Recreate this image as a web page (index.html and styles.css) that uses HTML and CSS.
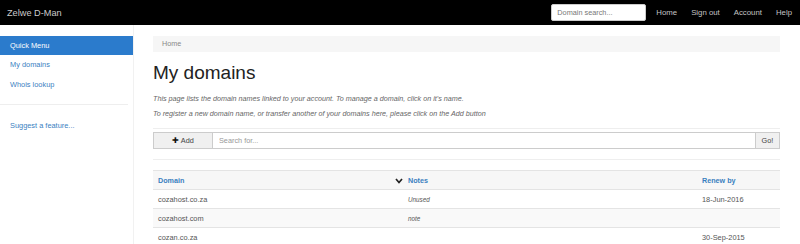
FILE: index.html
```html
<!DOCTYPE html>
<html lang="en">
<head>
    <meta charset="UTF-8">
    <title>Zelwe D-Man</title>
    <link rel="stylesheet" href="styles.css">
</head>
<body>
    <!-- Top bar -->
    <nav class="topbar">
        <a class="brand" href="#">Zelwe D-Man</a>
        <div class="topbar-right">
            <input type="text" class="top-search" placeholder="Domain search...">
            <a href="#">Home</a>
            <a href="#">Sign out</a>
            <a href="#">Account</a>
            <a href="#">Help</a>
        </div>
    </nav>

    <div class="layout">
        <!-- Side menu -->
        <aside class="sidebar">
            <div class="menu-title">Quick Menu</div>
            <a class="menu-item" href="#">My domains</a>
            <a class="menu-item" href="#">Whois lookup</a>
            <hr class="menu-divider">
            <a class="menu-item suggest" href="#">Suggest a feature...</a>
        </aside>

        <main class="content">
            <div class="breadcrumb">Home</div>
            <h1>My domains</h1>
            <p class="intro">This page lists the domain names linked to your account. To manage a domain, click on it's name.</p>
            <p class="intro last">To register a new domain name, or transfer another of your domains here, please click on the Add button</p>
            <hr class="rule">

            <div class="input-group">
                <button class="btn add-btn"><span class="plus">&#10010;</span> Add</button>
                <input type="text" class="search" placeholder="Search for...">
                <button class="btn go-btn">Go!</button>
            </div>
            <hr class="rule">

            <table class="domains">
                <tr>
                    <th class="col-domain">Domain
                        <svg class="chevron" width="8" height="6" viewBox="0 0 8 6"><path d="M1 1 L4 4.5 L7 1" fill="none" stroke="#222" stroke-width="1.7"/></svg>
                    </th>
                    <th class="col-notes">Notes</th>
                    <th class="col-renew">Renew by</th>
                </tr>
                <tr>
                    <td>cozahost.co.za</td>
                    <td class="note">Unused</td>
                    <td>18-Jun-2016</td>
                </tr>
                <tr class="striped">
                    <td>cozahost.com</td>
                    <td class="note">note</td>
                    <td></td>
                </tr>
                <tr>
                    <td>cozan.co.za</td>
                    <td class="note"></td>
                    <td>30-Sep-2015</td>
                </tr>
            </table>
        </main>
    </div>
</body>
</html>
```

FILE: styles.css
```css
body {
    margin: 0;
    font-family: "Liberation Sans", Arial, sans-serif;
    font-size: 7.4px;
    color: #555;
    background: #fff;
}
a {
    color: #3a7fbf;
    text-decoration: none;
}

/* top bar */
.topbar {
    height: 25px;
    background: #000;
    display: flex;
    align-items: center;
    justify-content: space-between;
    padding: 0 8px 0 7px;
}
.brand {
    color: #ccc;
    font-size: 9.2px;
}
.topbar-right {
    display: flex;
    align-items: center;
}
.topbar-right a {
    color: #c4c4c4;
    font-size: 7.8px;
    margin-left: 14px;
}
.top-search {
    width: 95px;
    height: 17px;
    box-sizing: border-box;
    border: 1px solid #ccc;
    border-radius: 2px;
    padding: 0 5px;
    font-family: inherit;
    font-size: 7.3px;
    margin-right: -4px;
}
.top-search::placeholder {
    color: #777;
}

/* layout */
.layout {
    display: flex;
}
.sidebar {
    width: 133px;
    min-height: 219px;
    border-right: 1px solid #f1f1f1;
    padding-top: 11px;
    display: flex;
    flex-direction: column;
    flex-shrink: 0;
}
.menu-title {
    background: #2b7bcc;
    color: #fff;
    height: 19px;
    line-height: 19px;
    padding-left: 10px;
}
.menu-item {
    display: block;
    height: 20px;
    line-height: 20px;
    padding-left: 10px;
}
.menu-divider {
    border: 0;
    border-top: 1px solid #eee;
    margin: 9px 5px 11px 0;
}

.content {
    flex: 1;
    padding: 11px 20px 0 19px;
}
.breadcrumb {
    background: #f6f6f6;
    height: 16px;
    line-height: 16px;
    padding-left: 9px;
    color: #888;
    font-size: 7.2px;
}
h1 {
    font-weight: normal;
    font-size: 19px;
    color: #222;
    margin: 10px 0 10px 0;
}
.intro {
    font-style: italic;
    color: #666;
    font-size: 7.2px;
    margin: 0 0 6px 0;
}
.intro.last {
    margin-bottom: 10px;
}
.rule {
    border: 0;
    border-top: 1px solid #eee;
    margin: 0;
}

/* search row */
.input-group {
    display: flex;
    height: 17px;
    margin: 3px 0 10px 0;
}
.btn {
    background: #f0f0f0;
    border: 1px solid #ccc;
    font-family: inherit;
    font-size: 7.3px;
    color: #444;
    padding: 0;
}
.add-btn {
    width: 60px;
}
.plus {
    font-size: 8px;
    color: #111;
}
.search {
    flex: 1;
    border: 1px solid #ccc;
    border-left: 0;
    border-right: 0;
    font-family: inherit;
    font-size: 7.3px;
    padding: 0 6px;
}
.search::placeholder {
    color: #999;
}
.go-btn {
    width: 25px;
}

/* domains table */
.domains {
    width: 100%;
    border-collapse: collapse;
    margin-top: 10px;
}
.domains th, .domains td {
    text-align: left;
    height: 18px;
    padding: 0 5px;
    border-top: 1px solid #e4e4e4;
}
.domains th {
    background: #f7f7f7;
    color: #3a7fbf;
    font-weight: bold;
    font-size: 7.2px;
}
.col-domain {
    width: 240px;
    position: relative;
}
.chevron {
    position: absolute;
    right: 0;
    top: 7px;
}
.col-renew {
    width: 73px;
}
.note {
    font-style: italic;
    font-size: 6.3px;
}
.striped td {
    background: #f9f9f9;
}
```
